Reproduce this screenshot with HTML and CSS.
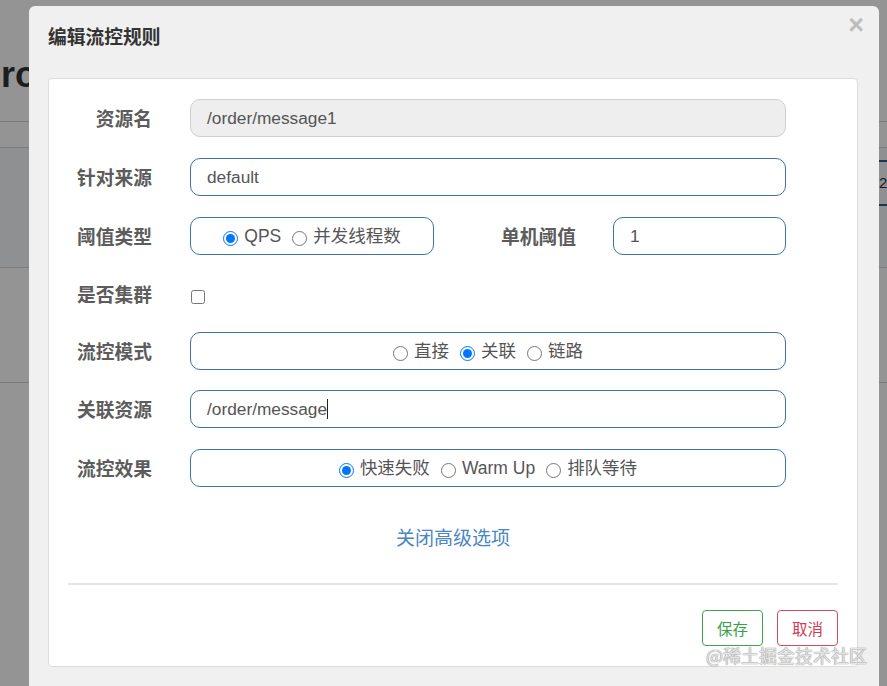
FILE: index.html
```html
<!DOCTYPE html>
<html lang="zh-CN">
<head>
<meta charset="utf-8">
<title>编辑流控规则</title>
<link rel="stylesheet" href="styles.css">
</head>
<body>
<div class="page">
  <div class="page-head"><span class="page-title">ro</span></div>
  <div class="page-row thin"></div>
  <div class="page-row tall">
    <div class="page-search">2</div>
  </div>
  <div class="page-row mid"></div>
</div>

<div class="overlay">
  <div class="dialog">
    <div class="dialog-header">
      <h4 class="dialog-title">编辑流控规则</h4>
      <span class="close">×</span>
    </div>
    <div class="panel">
      <div class="form">
        <div class="row">
          <label class="label">资源名</label>
          <div class="field disabled">/order/message1</div>
        </div>
        <div class="row">
          <label class="label">针对来源</label>
          <div class="field">default</div>
        </div>
        <div class="row">
          <label class="label">阈值类型</label>
          <div class="field group short">
            <label class="opt"><input type="radio" name="t" checked>QPS</label>
            <label class="opt"><input type="radio" name="t">并发线程数</label>
          </div>
          <label class="label wide">单机阈值</label>
          <div class="field small">1</div>
        </div>
        <div class="row check-row">
          <label class="label">是否集群</label>
          <div class="check-wrap"><input type="checkbox" class="check"></div>
        </div>
        <div class="row">
          <label class="label">流控模式</label>
          <div class="field group">
            <label class="opt"><input type="radio" name="m">直接</label>
            <label class="opt"><input type="radio" name="m" checked>关联</label>
            <label class="opt"><input type="radio" name="m">链路</label>
          </div>
        </div>
        <div class="row">
          <label class="label">关联资源</label>
          <div class="field">/order/message<span class="caret"></span></div>
        </div>
        <div class="row last">
          <label class="label">流控效果</label>
          <div class="field group">
            <label class="opt"><input type="radio" name="e" checked>快速失败</label>
            <label class="opt"><input type="radio" name="e">Warm Up</label>
            <label class="opt"><input type="radio" name="e">排队等待</label>
          </div>
        </div>
      </div>
      <div class="advanced"><a class="link">关闭高级选项</a></div>
      <div class="divider"></div>
      <div class="actions">
        <button class="btn save">保存</button>
        <button class="btn cancel">取消</button>
      </div>
    </div>
  </div>
  <div class="watermark">@稀土掘金技术社区</div>
</div>
</body>
</html>
```

FILE: styles.css
```css
html, body {
  margin: 0;
  padding: 0;
  width: 887px;
  height: 686px;
  overflow: hidden;
  background: #ffffff;
  font-family: "Liberation Sans", "Noto Sans CJK SC", sans-serif;
}

/* background page */
.page {
  display: flex;
  flex-direction: column;
  width: 887px;
}
.page-head {
  height: 121px;
  border-bottom: 1px solid #d6d6d6;
  display: flex;
  align-items: flex-start;
}
.page-title {
  font-size: 36px;
  line-height: 40px;
  font-weight: bold;
  color: #333;
  margin-left: 1px;
  margin-top: 55px;
}
.page-row {
  border-bottom: 1px solid #d6d6d6;
}
.page-row.thin { height: 25px; }
.page-row.tall {
  height: 119px;
  display: flex;
  justify-content: flex-end;
  align-items: flex-start;
  background: #f7f9fb;
}
.page-row.mid { height: 114px; }
.page-search {
  margin-top: 12px;
  width: 8px;
  height: 42px;
  border-top: 2px solid #2b5d8a;
  border-bottom: 2px solid #2b5d8a;
  font-size: 15px;
  line-height: 42px;
  color: #333;
  overflow: visible;
}

/* overlay + dialog */
.overlay {
  position: fixed;
  inset: 0;
  background: rgba(0, 0, 0, 0.42);
}
.dialog {
  position: absolute;
  left: 29px;
  top: 6px;
  width: 850px;
  height: 720px;
  background: #f0f0f0;
  border-radius: 6px;
  box-sizing: border-box;
  padding: 0 21px 0 19px;
}
.dialog-header {
  display: flex;
  justify-content: space-between;
  align-items: flex-start;
  padding-top: 19px;
  height: 53px;
  box-sizing: border-box;
}
.dialog-title {
  margin: 0;
  font-size: 18.75px;
  line-height: 26px;
  font-weight: bold;
  color: #333;
}
.close {
  font-size: 27px;
  font-weight: bold;
  line-height: 20px;
  color: #bdbdbd;
  margin-top: -10px;
  margin-right: -6px;
}

.panel {
  margin-top: 19px;
  background: #fff;
  border: 1px solid #dcdcdc;
  border-radius: 4px;
  padding: 20px 19px 19px 0;
  height: 589px;
  box-sizing: border-box;
}
.form {
  display: flex;
  flex-direction: column;
  gap: 20px;
}
.row {
  display: flex;
  align-items: center;
  height: 38px;
}
.row + .row:nth-child(2),
.row + .row:nth-child(3) {
  margin-top: 1px;
}
.row.check-row {
  height: 36px;
  margin-top: 1px;
}
.row.last {
  margin-top: 1px;
}
.label {
  width: 103px;
  flex: none;
  text-align: right;
  font-size: 18.75px;
  font-weight: bold;
  color: #5c5c5c;
  margin-right: 38px;
  font-family: "Noto Sans CJK SC", sans-serif;
  line-height: 26px;
}
.label.wide {
  width: 142px;
  margin-right: 37px;
}
.field {
  box-sizing: border-box;
  width: 596px;
  height: 38px;
  border: 1px solid #3e73a3;
  border-radius: 10px;
  padding: 0 16px;
  font-size: 17.3px;
  color: #555;
  display: flex;
  align-items: center;
  background: #fff;
}
.field.disabled {
  background: #eeeeee;
  border-color: #cfcfcf;
}
.field.short { width: 244px; }
.field.small { width: 173px; }
.field.group {
  justify-content: center;
  padding: 0;
  gap: 11px;
}
.opt {
  display: flex;
  align-items: center;
  font-size: 17.5px;
  color: #555;
  line-height: 22px;
}
.opt input {
  margin: 4px 6px 0 0;
  width: 15px;
  height: 15px;
}
.caret {
  display: inline-block;
  width: 1px;
  height: 20px;
  background: #222;
}
.check-wrap {
  display: flex;
  align-items: center;
  height: 36px;
  padding-top: 6px;
  box-sizing: border-box;
}
.check {
  margin: 0 0 0 1px;
  width: 14px;
  height: 14px;
}

.advanced {
  margin-left: 19px;
  margin-top: 37px;
  text-align: center;
  line-height: 26px;
}
.link {
  font-size: 19px;
  color: #4a86c2;
  font-family: "Noto Sans CJK SC", sans-serif;
  cursor: pointer;
}
.divider {
  margin: 30px 0 0 19px;
  height: 2px;
  background: #e5e5e5;
}
.actions {
  display: flex;
  justify-content: flex-end;
  gap: 14px;
  margin-top: 25px;
}
.btn {
  width: 61px;
  height: 36px;
  background: #fff;
  border-radius: 4px;
  font-size: 15.5px;
  font-family: "Noto Sans CJK SC", sans-serif;
  padding: 0;
}
.btn.save {
  border: 1px solid #3fa34f;
  color: #35a045;
}
.btn.cancel {
  border: 1px solid #d04a5e;
  color: #d33a4f;
}

.watermark {
  position: absolute;
  left: 706px;
  top: 643px;
  font-size: 18px;
  line-height: 24px;
  color: rgba(245, 245, 245, 0.85);
  font-family: "Noto Sans CJK SC", sans-serif;
  text-shadow: 0 0 1px #888, 0 0 1px #888;
  white-space: nowrap;
}
```
